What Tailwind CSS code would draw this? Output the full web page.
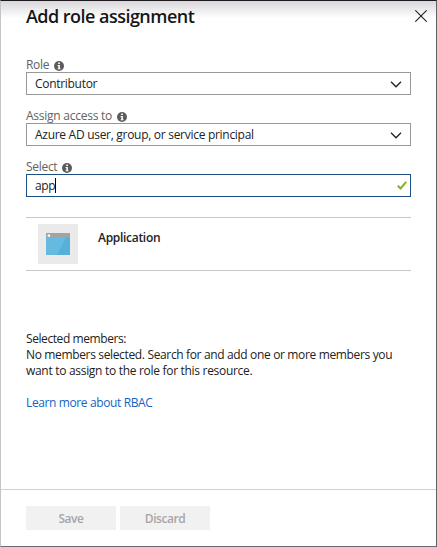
<!DOCTYPE html>
<html lang="en">
<head>
<meta charset="utf-8">
<title>Add role assignment</title>
<script src="https://cdn.jsdelivr.net/npm/@tailwindcss/browser@4"></script>
</head>
<body class="w-[437px] h-[547px] overflow-hidden bg-white">
<svg class="hidden">
  <symbol id="info" viewBox="0 0 10 10"><circle cx="5" cy="5" r="5" fill="#5c5c5c"/><path d="M4.2 1.6h1.7v1.5H4.2zM3.6 4h2.3v3.4h.8v.9H3.5v-.9h.8V4.9h-.7z" fill="#fff"/></symbol>
  <symbol id="chevron" viewBox="0 0 12 7"><path d="M1 .8l5 5 5-5" fill="none" stroke="#222" stroke-width="1.3"/></symbol>
</svg>
<main class="w-[437px] h-[547px] flex flex-col border border-t-[#1d191e] border-l-[#c5c4c6] border-r-[#626164] border-b-[#6a696b] font-['Open_Sans','Noto_Sans',sans-serif] text-[12px] text-[#222]">
  <header class="h-[58px] shrink-0 pl-[25px] pr-[9px] flex justify-between items-start bg-linear-to-b from-[#d9d7da] to-white to-[17px]">
    <h1 class="mt-[3px] text-[18px] leading-6 font-semibold text-[#161616] whitespace-nowrap tracking-[-0.53px]">Add role assignment</h1>
    <svg class="mt-[9px] w-3 h-3" viewBox="0 0 12 12"><path d="M.3.3l11.4 11.4M11.7.3L.3 11.7" stroke="#222" stroke-width="1.1"/></svg>
  </header>
  <section class="pl-[25px] pr-[25px] flex-1">
    <div class="h-[51px]">
      <div class="h-[13px] flex items-center gap-[5px] text-[#626262]"><span class="-mt-[2px] leading-[13px] tracking-[-0.3px]">Role</span><svg class="w-[10px] h-[10px]"><use href="#info"/></svg></div>
      <div class="h-[23px] border border-[#999] pl-2 pr-2 flex items-center justify-between"><span class="mt-px tracking-[-0.3px]">Contributor</span><svg class="w-3 h-[7px] mt-[2px]"><use href="#chevron"/></svg></div>
    </div>
    <div class="h-[51px]">
      <div class="h-[13px] flex items-center gap-[5px] text-[#626262]"><span class="-mt-[2px] leading-[13px] tracking-[-0.25px]">Assign access to</span><svg class="w-[10px] h-[10px]"><use href="#info"/></svg></div>
      <div class="h-[23px] border border-[#999] pl-2 pr-2 flex items-center justify-between"><span class="mt-px tracking-[-0.29px]">Azure AD user, group, or service principal</span><svg class="w-3 h-[7px] mt-[2px]"><use href="#chevron"/></svg></div>
    </div>
    <div class="h-[51px]">
      <div class="h-[13px] flex items-center gap-[5px] text-[#626262]"><span class="-mt-[2px] leading-[13px] tracking-[-0.3px]">Select</span><svg class="w-[10px] h-[10px]"><use href="#info"/></svg></div>
      <div class="h-[23px] border border-[#1b4f82] pl-2 pr-[3px] flex items-center justify-between"><span class="flex items-center"><span class="mt-px tracking-[-0.4px]">app</span><span class="w-px h-[15px] bg-black"></span></span><svg class="w-[10px] h-[9px]" viewBox="0 0 10 9"><path d="M.8 4.7l2.8 2.8L9.2.9" fill="none" stroke="#7fb51c" stroke-width="2"/></svg></div>
    </div>
    <div class="mt-[5px] h-[54px] border-y border-[#c8c8c8] flex pl-3 pt-[6px]">
      <div class="w-10 h-10 bg-[#eaeaea] flex items-center justify-center">
        <svg class="w-6 h-[22px]" viewBox="0 0 24 22"><path d="M0 0h24v22H0z" fill="#66badf"/><path d="M20 4h4v18H11z" fill="#56b1da"/><path d="M0 0h24v4.5H0z" fill="#a3a3a3"/><path d="M1.7 1.5h2.4v2.2H1.7z" fill="#fff"/></svg>
      </div>
      <span class="ml-5 mt-[6px] leading-4 font-semibold tracking-[-0.3px]">Application</span>
    </div>
    <div class="mt-[60px] leading-4 whitespace-nowrap">
      <p class="tracking-[-0.42px]">Selected members:</p>
      <p class="tracking-[-0.35px]">No members selected. Search for and add one or more members you</p>
      <p class="tracking-[-0.3px]">want to assign to the role for this resource.</p>
      <a class="block mt-4 text-[#1763bf] tracking-[-0.38px]">Learn more about RBAC</a>
    </div>
  </section>
  <footer class="h-[57px] shrink-0 border-t border-[#d2d2d2] pl-[25px] pt-4 flex gap-1 font-semibold text-[#a6a6a6] tracking-[-0.45px]">
    <button class="w-[90px] h-6 bg-[#f1f1f1] leading-[26px]">Save</button>
    <button class="w-[90px] h-6 bg-[#f1f1f1] leading-[26px]">Discard</button>
  </footer>
</main>
</body>
</html>
